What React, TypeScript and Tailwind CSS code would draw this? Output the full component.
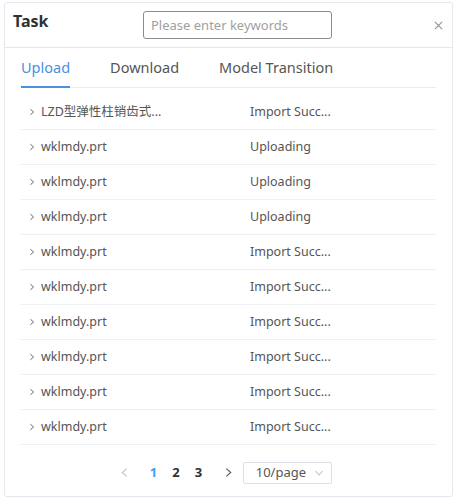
import React, { useState } from 'react';

const ROWS = [
  { name: 'LZD型弹性柱销齿式...', status: 'Import Succ...' },
  { name: 'wklmdy.prt', status: 'Uploading' },
  { name: 'wklmdy.prt', status: 'Uploading' },
  { name: 'wklmdy.prt', status: 'Uploading' },
  { name: 'wklmdy.prt', status: 'Import Succ...' },
  { name: 'wklmdy.prt', status: 'Import Succ...' },
  { name: 'wklmdy.prt', status: 'Import Succ...' },
  { name: 'wklmdy.prt', status: 'Import Succ...' },
  { name: 'wklmdy.prt', status: 'Import Succ...' },
  { name: 'wklmdy.prt', status: 'Import Succ...' },
];

const TABS = ['Upload', 'Download', 'Model Transition'];

const Chevron = ({ dir = 'right', className = '' }: { dir?: 'right' | 'left' | 'down'; className?: string }) => {
  const d = dir === 'right' ? 'M3 1.5 L7 5 L3 8.5' : dir === 'left' ? 'M7 1.5 L3 5 L7 8.5' : 'M1.5 3 L5 7 L8.5 3';
  return (
    <svg viewBox="0 0 10 10" className={className} fill="none" stroke="currentColor" strokeWidth="1.1">
      <path d={d} />
    </svg>
  );
};

export default function App() {
  const [tab, setTab] = useState(0);
  const [page, setPage] = useState(1);

  return (
    <div className="w-[453px] h-[500px] bg-white pt-[2px] pl-[4px]" style={{ fontFamily: '"Noto Sans", "Noto Sans CJK SC", sans-serif' }}>
      <div className="w-[449px] h-[495px] border border-[#e4e7ed] rounded-[3px] flex flex-col">
        {/* header */}
        <div className="h-[45px] border-b border-[#e4e7ed] flex items-center pl-[8px] pr-[9px] shrink-0">
          <h2 className="text-[16px] font-bold text-[#303133] w-[130px] leading-none -mt-[8px]">Task</h2>
          <input
            type="text"
            placeholder="Please enter keywords"
            className="w-[189px] h-[28px] border border-[#8c8c8c] rounded-[3px] px-[7px] text-[13px] text-[#606266] placeholder:text-[#a0a0a0] outline-none -mt-[1px]"
          />
          <button className="ml-auto text-[#909399] mt-[1px]">
            <svg viewBox="0 0 10 10" className="w-[9px] h-[9px]" stroke="currentColor" strokeWidth="1.3">
              <path d="M1 1 L9 9 M9 1 L1 9" />
            </svg>
          </button>
        </div>

        {/* tabs */}
        <div className="px-[16px] pt-[8px] flex-1 flex flex-col">
          <div className="flex gap-[40px] border-b border-[#e9ebef] h-[32px]">
            {TABS.map((t, i) => (
              <button
                key={t}
                onClick={() => setTab(i)}
                className={`text-[14.5px] leading-none h-[32px] pt-[2px] pb-[9px] -mb-px border-b-2 ${tab === i ? 'text-[#4a90e2] border-[#4a90e2]' : 'text-[#555] border-transparent'}`}
              >
                {t}
              </button>
            ))}
          </div>

          {/* list */}
          <div className="mt-[7px]">
            {ROWS.map((r, i) => (
              <div key={i} className="h-[35px] border-b border-[#eef0f3] flex items-center text-[12.5px] text-[#555]">
                <Chevron className="w-[8px] h-[8px] ml-[7px] mr-[5px] text-[#555]" />
                <span className="w-[209px] whitespace-nowrap">{r.name}</span>
                <span className="whitespace-nowrap">{r.status}</span>
              </div>
            ))}
          </div>

          {/* pagination */}
          <div className="flex items-center justify-center h-[50px] pt-[5px] pr-[6px]">
            <button className="text-[#c0c4cc] mr-[12px]">
              <Chevron dir="left" className="w-[11px] h-[11px]" />
            </button>
            {[1, 2, 3].map(p => (
              <button
                key={p}
                onClick={() => setPage(p)}
                className={`w-[22.5px] text-[13px] font-bold ${page === p ? 'text-[#409eff]' : 'text-[#303133]'}`}
              >
                {p}
              </button>
            ))}
            <button className="text-[#606266] ml-[13px] mr-[9px]">
              <Chevron className="w-[11px] h-[11px]" />
            </button>
            <div className="w-[89px] h-[22px] border border-[#dcdfe6] rounded-[2px] flex items-center pl-[12px] pr-[7px] text-[13px] text-[#555]">
              <span>10/page</span>
              <Chevron dir="down" className="w-[10px] h-[10px] ml-auto text-[#c0c4cc]" />
            </div>
          </div>
        </div>
      </div>
    </div>
  );
}
